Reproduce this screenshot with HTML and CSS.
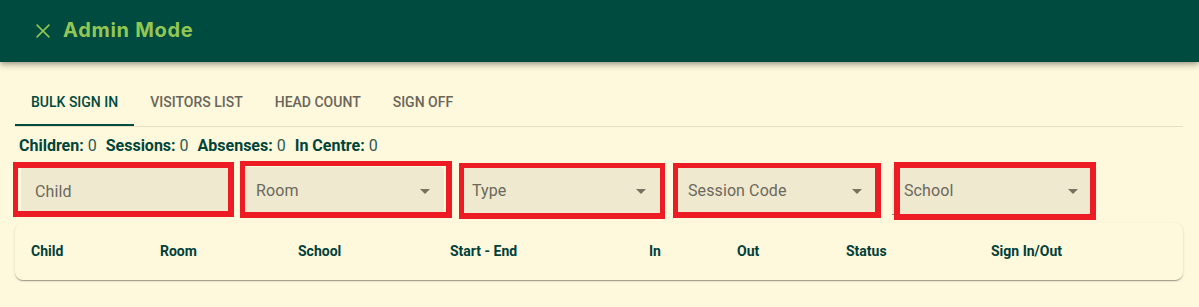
FILE: index.html
```html
<!DOCTYPE html>
<html lang="en">
<head>
<meta charset="utf-8">
<title>Admin Mode</title>
<link rel="stylesheet" href="styles.css">
</head>
<body>
<header class="appbar">
  <button class="close-btn" aria-label="Close">
    <svg viewBox="0 0 24 24" width="24" height="24"><path d="M5.6 5.6 18.4 18.4M18.4 5.6 5.6 18.4" stroke="currentColor" stroke-width="1.5" fill="none"/></svg>
  </button>
  <h1 class="title">Admin Mode</h1>
</header>
<main class="content">
  <nav class="tabs">
    <div class="tab active">Bulk Sign In</div>
    <div class="tab">Visitors List</div>
    <div class="tab">Head Count</div>
    <div class="tab">Sign Off</div>
  </nav>
  <div class="stats">
    <span class="stat"><b>Children:</b> 0</span>
    <span class="stat"><b>Sessions:</b> 0</span>
    <span class="stat"><b>Absenses:</b> 0</span>
    <span class="stat"><b>In Centre:</b> 0</span>
  </div>
  <div class="filters">
    <div class="field field-child mark mark-child"><span class="label">Child</span></div>
    <div class="field select mark mark-room"><span class="label">Room</span><svg class="arrow" viewBox="0 0 24 24" width="24" height="24"><path d="M7 10l5 5 5-5z"/></svg></div>
    <div class="field select mark mark-type"><span class="label">Type</span><svg class="arrow" viewBox="0 0 24 24" width="24" height="24"><path d="M7 10l5 5 5-5z"/></svg></div>
    <div class="field select mark mark-session"><span class="label">Session Code</span><svg class="arrow" viewBox="0 0 24 24" width="24" height="24"><path d="M7 10l5 5 5-5z"/></svg></div>
    <div class="field select mark mark-school"><span class="label">School</span><svg class="arrow" viewBox="0 0 24 24" width="24" height="24"><path d="M7 10l5 5 5-5z"/></svg></div>
  </div>
  <section class="card">
    <div class="thead">
      <div class="th">Child</div>
      <div class="th">Room</div>
      <div class="th">School</div>
      <div class="th">Start - End</div>
      <div class="th">In</div>
      <div class="th">Out</div>
      <div class="th">Status</div>
      <div class="th">Sign In/Out</div>
    </div>
  </section>
</main>
</body>
</html>
```

FILE: styles.css
```css
* { box-sizing: border-box; }
html, body { margin: 0; padding: 0; }
body {
  background: #fef8dc;
  font-family: Roboto, "Liberation Sans", Arial, sans-serif;
  color: #004438;
  width: 1199px;
  height: 307px;
  overflow: hidden;
}

.appbar {
  height: 62px;
  background: #004b3f;
  display: flex;
  align-items: center;
  padding-left: 31px;
  box-shadow: 0 2px 4px -1px rgba(0,0,0,.2), 0 4px 5px 0 rgba(0,0,0,.14), 0 1px 10px 0 rgba(0,0,0,.12);
  position: relative;
  z-index: 1;
}
.close-btn {
  width: 24px;
  height: 24px;
  padding: 0;
  border: 0;
  background: none;
  color: #93c753;
  display: flex;
}
.title {
  margin: -2px 0 0 8px;
  font-family: Inter, "Open Sans", sans-serif;
  font-weight: 700;
  font-size: 20px;
  letter-spacing: 0.7px;
  color: #93c753;
}

.content {
  padding: 16px 16px 0 15px;
}

.tabs {
  display: flex;
  height: 49px;
  border-bottom: 1px solid #e6dfc2;
}
.tab {
  position: relative;
  height: 48px;
  padding: 0 16px;
  display: flex;
  align-items: center;
  font-size: 14px;
  font-weight: 500;
  text-transform: uppercase;
  letter-spacing: 0;
  color: #6a665a;
}
.tab.active { color: #004b3f; }
.tab.active::after {
  content: "";
  position: absolute;
  left: 0;
  right: 0;
  bottom: 0;
  height: 2px;
  background: #004b3f;
}

.stats {
  margin-top: 8px;
  padding-left: 4px;
  line-height: 22px;
  font-size: 16px;
  color: #2d5a52;
  display: flex;
  gap: 9px;
}
.stats b { color: #004438; font-weight: 700; }

.filters {
  display: flex;
  gap: 16px;
  margin-top: 10px;
  padding-left: 6px;
}
.field {
  position: relative;
  width: 200px;
  height: 48px;
  background: #efe9cf;
  border-radius: 4px 4px 0 0;
  display: flex;
  align-items: center;
  padding-left: 12px;
}
.field.select { border-bottom: 1px solid #8d897a; }
.field-child { width: 207px; padding-left: 14px; }
.label {
  font-size: 16px;
  color: #6b685c;
  letter-spacing: 0.1px;
}
.arrow {
  position: absolute;
  right: 7px;
  top: 12px;
  fill: #77735f;
}

.mark::after {
  content: "";
  position: absolute;
  border: 5px solid #ed1c24;
  pointer-events: none;
}
.mark-child::after { left: -8px; right: -6px; top: -5px; bottom: -2px; border-width: 6px 6px 6px 5px; }
.mark-room::after { left: -4px; right: -8px; top: -6px; bottom: -4px; border-width: 5px 6px 6px 5px; }
.mark-type::after { left: -1px; right: -5px; top: -4px; bottom: -5px; border-width: 5px 5px 6px 5px; }
.mark-session::after { left: -3px; right: -5px; top: -4px; bottom: -4px; border-width: 5px 6px 6px 5px; }
.mark-school::after { left: 2px; right: -4px; top: -5px; bottom: -6px; border-width: 6px 6px 6px 6px; }

.card {
  margin-top: 8px;
  height: 57px;
  background: #fef8dc;
  border-radius: 8px;
  box-shadow: 0 2px 1px -1px rgba(0,0,0,.2), 0 1px 1px 0 rgba(0,0,0,.14), 0 1px 3px 0 rgba(0,0,0,.12);
}
.thead {
  display: grid;
  grid-template-columns: 129px 138px 152px 199px 88px 109px 145px 208px;
  height: 55px;
  align-items: center;
}
.th {
  padding-left: 16px;
  font-size: 14px;
  font-weight: 700;
  color: #00403a;
}
```
